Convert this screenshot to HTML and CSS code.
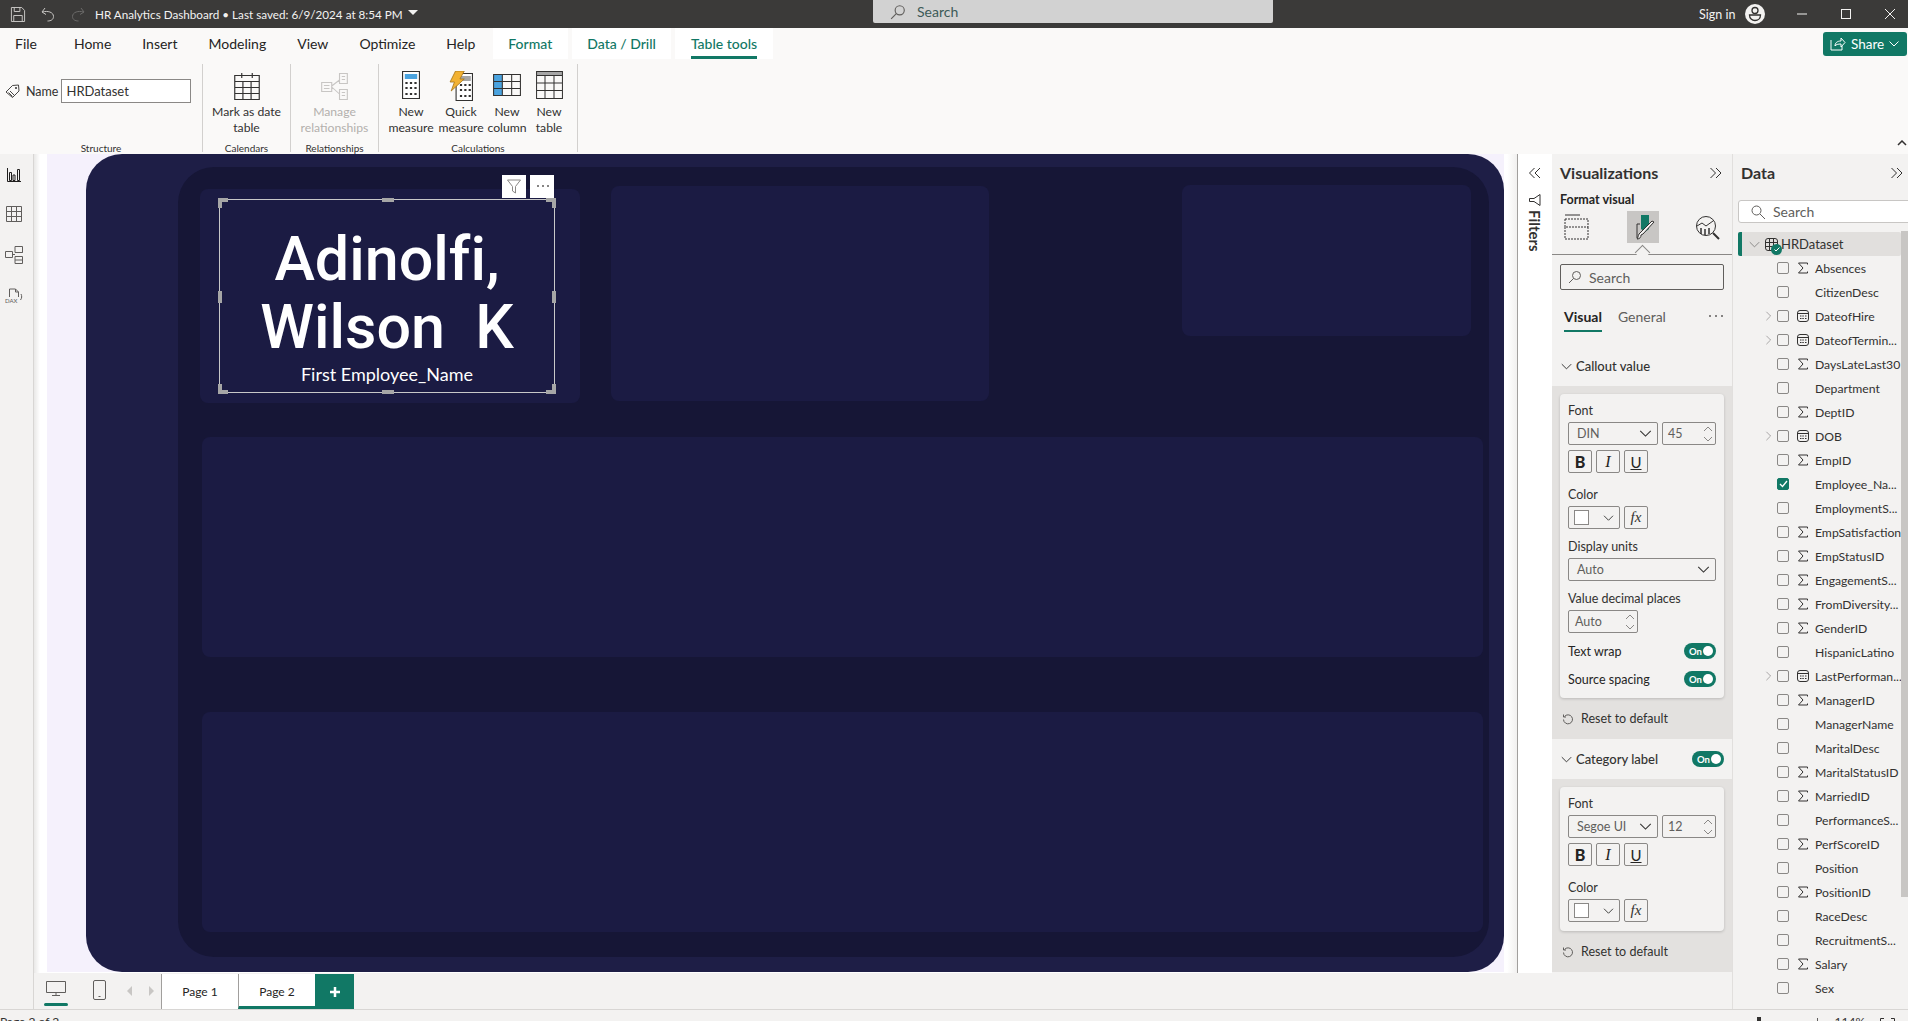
FILE: index.html
```html
<!DOCTYPE html>
<html lang="en">
<head>
    <meta charset="UTF-8">
    <title>HR Analytics Dashboard</title>
    <link rel="stylesheet" href="styles.css">
</head>
<body>
    <svg class="sprite" width="0" height="0">
        <symbol id="sigma" viewBox="0 0 12 12"><path d="M10.5 2.5V1H1.5L6 6 1.5 11h9V9.5" fill="none" stroke="#323130"/></symbol>
        <symbol id="cal" viewBox="0 0 12 12"><rect x=".5" y=".5" width="11" height="11" rx="2.500" fill="none" stroke="#323130"/><path d="M.5 3.500h11" stroke="#323130"/><path d="M3 6h1.500M5.300 6h1.500M8 6h1.500M3 8.500h1.500M5.300 8.500h1.500M8 8.500h1.500" stroke="#323130"/></symbol>
        <symbol id="chev-r" viewBox="0 0 10 14"><path d="M2 1l6 6-6 6" fill="none" stroke="#8a8886"/></symbol>
        <symbol id="chev-d" viewBox="0 0 14 8"><path d="M1 1l6 6 6-6" fill="none" stroke="#323130" stroke-width="1.200"/></symbol>
        <symbol id="double-r" viewBox="0 0 14 12"><path d="M1.500 1l5 5-5 5M7 1l5 5-5 5" fill="none" stroke="#323130"/></symbol>
        <symbol id="double-l" viewBox="0 0 14 12"><path d="M6.500 1l-5 5 5 5M12 1L7 6l5 5" fill="none" stroke="#323130"/></symbol>
        <symbol id="spin" viewBox="0 0 10 16"><path d="M1 5l4-4 4 4M1 11l4 4 4-4" fill="none" stroke="#8a8886"/></symbol>
        <symbol id="reset" viewBox="0 0 12 12"><path d="M2.500 3.500a4.500 4.500 0 1 1-1 3M1.500 1.500v2.500h2.500" fill="none" stroke="#605e5c"/></symbol>
        <symbol id="mag" viewBox="0 0 14 14"><circle cx="8.500" cy="5.500" r="4" fill="none" stroke="#605e5c"/><path d="M5.500 8.500L1 13" stroke="#605e5c"/></symbol>
    </svg>

    <header class="titlebar">
        <svg class="tb-icon" width="16" height="17" viewBox="0 0 17 17" preserveAspectRatio="none"><path d="M1.500 1.500h11l3 3v11h-14z" fill="none" stroke="#c8c6c4"/><path d="M4.500 1.500v4h6v-4M4 15.500V9.500h9v6" fill="none" stroke="#c8c6c4"/></svg>
        <svg class="tb-undo" width="14" height="15" viewBox="0 0 14 15"><path d="M4 1L1 5l4 2.500M1.500 5c5-1.500 11 0 11 4.500 0 3-2.500 4.500-6 4.500" fill="none" stroke="#c8c6c4"/></svg>
        <svg class="tb-redo" width="14" height="15" viewBox="0 0 14 15"><path d="M10 1l3 4-4 2.500M12.500 5c-5-1.500-11 0-11 4.500 0 3 2.500 4.500 6 4.500" fill="none" stroke="#6b6a69"/></svg>
        <span class="doc-title">HR Analytics Dashboard • Last saved: 6/9/2024 at 8:54 PM</span>
        <span class="doc-caret"></span>
        <div class="top-search">
            <svg width="16" height="16"><use href="#mag"/></svg>
            <span>Search</span>
        </div>
        <span class="sign-in">Sign in</span>
        <svg class="avatar" width="20" height="20" viewBox="0 0 20 20"><circle cx="10" cy="10" r="10" fill="#f3f2f1"/><circle cx="10" cy="6.500" r="3" fill="none" stroke="#323130" stroke-width="1.300"/><path d="M4.500 11h11c0 3.500-2.500 5.500-5.500 5.500S4.500 14.500 4.500 11z" fill="none" stroke="#323130" stroke-width="1.300"/></svg>
        <svg class="win-min" width="10" height="10"><path d="M0 5h10" stroke="#f3f2f1"/></svg>
        <svg class="win-max" width="10" height="10"><rect x=".5" y=".5" width="9" height="9" fill="none" stroke="#f3f2f1"/></svg>
        <svg class="win-close" width="10" height="10"><path d="M0 0l10 10M10 0L0 10" stroke="#f3f2f1"/></svg>
    </header>

    <section class="ribbon">
        <nav class="tabs">
            <span class="tab tab-file">File</span>
            <span class="tab">Home</span>
            <span class="tab">Insert</span>
            <span class="tab">Modeling</span>
            <span class="tab">View</span>
            <span class="tab">Optimize</span>
            <span class="tab tab-help">Help</span>
            <span class="tab tab-context">Format</span>
            <span class="tab tab-context">Data / Drill</span>
            <span class="tab tab-context tab-active">Table tools</span>
        </nav>
        <button class="share">
            <svg width="16" height="14" viewBox="0 0 16 14"><path d="M1 3v10h11V9M5 9c0-3 2-5 6-5V1l4 4.500L11 10V7c-3 0-5 .5-6 2z" fill="none" stroke="#fff"/></svg>
            <span>Share</span>
            <svg width="10" height="6" viewBox="0 0 10 6"><path d="M.5.500L5 5 9.500.5" fill="none" stroke="#fff"/></svg>
        </button>
        <div class="groups">
            <div class="group group-structure">
                <div class="group-body name-row">
                    <svg width="15" height="15" viewBox="0 0 15 15"><path d="M1 8l6.500-6.500L13.500 1l.5 6-6.500 6.500zM3.500 8.500l4 4M5 7l4 4" fill="none" stroke="#323130" stroke-width=".9"/><circle cx="11" cy="4" r="1" fill="#323130"/></svg>
                    <span class="name-lbl">Name</span>
                    <span class="name-input">HRDataset</span>
                </div>
                <div class="group-label">Structure</div>
            </div>
            <div class="group group-calendars">
                <div class="group-body">
                    <div class="rb-btn">
                        <svg class="icon-date" width="28" height="28" viewBox="0 0 24 28" preserveAspectRatio="none"><path d="M1.500 3.500h21v24h-21zM1.500 9.500h21M1.500 15.500h21M1.500 21.500h21M8.500 9.500v18M15.500 9.500v18M7.500 1v5M16.500 1v5" fill="none" stroke="#323130"/></svg>
                        <span>Mark as date<br>table</span>
                    </div>
                </div>
                <div class="group-label">Calendars</div>
            </div>
            <div class="group group-rel">
                <div class="group-body">
                    <div class="rb-btn rb-off">
                        <svg class="icon-date" width="29" height="28" viewBox="0 0 26 28" preserveAspectRatio="none"><path d="M17.500 1.500h7v10h-7zM1.500 10.500h9v9h-9zM17.500 17.500h7v10h-7zM10.500 14l7-6M10.500 15l7 7M19.500 4.500h3M19.500 7.500h3M19.500 20.500h3M19.500 23.500h3M3.500 13.500h5M3.500 16.500h5" fill="none" stroke="#c8c6c4"/></svg>
                        <span>Manage<br>relationships</span>
                    </div>
                </div>
                <div class="group-label">Relationships</div>
            </div>
            <div class="group group-calc">
                <div class="group-body calc-row">
                    <div class="rb-btn btn-measure">
                        <svg width="18" height="28" viewBox="0 0 16 28" preserveAspectRatio="none"><rect x=".5" y=".5" width="15" height="27" fill="#fff" stroke="#323130"/><rect x="2.500" y="3" width="11" height="5" fill="#4aa3df"/><path d="M3 12h2M7 12h2M11 12h2M3 17h2M7 17h2M11 17h2M3 23h2M7 23h2M11 23h2" stroke="#323130" stroke-width="2"/></svg>
                        <span>New<br>measure</span>
                    </div>
                    <div class="rb-btn btn-quick">
                        <svg width="24" height="30" viewBox="0 0 22 30" preserveAspectRatio="none"><rect x="6.500" y="2.500" width="15" height="27" fill="#fff" stroke="#323130"/><rect x="9" y="5" width="11" height="5" fill="#a6a6a6"/><path d="M10 14h2M14 14h2M18 14h2M10 19h2M14 19h2M18 19h2M10 25h2M14 25h2M18 25h2" stroke="#323130" stroke-width="2"/><path d="M6 0h8l-4 8h4L2 20l3-9H1z" fill="#f2b233" stroke="#a8761a" stroke-width=".8"/></svg>
                        <span>Quick<br>measure</span>
                    </div>
                    <div class="rb-btn btn-col">
                        <svg class="icon-col" width="28" height="22" viewBox="0 0 24 22" preserveAspectRatio="none"><rect x=".5" y=".5" width="7.500" height="21" fill="#4aa3df"/><path d="M.5.500h23v21H.5zM8 .5v21M16 .5v21M.5 7.500h23M.5 14.500h23" fill="none" stroke="#323130" stroke-width=".9"/></svg>
                        <span>New<br>column</span>
                    </div>
                    <div class="rb-btn btn-table">
                        <svg width="27" height="28" viewBox="0 0 24 28" preserveAspectRatio="none"><rect x=".5" y=".5" width="23" height="4" fill="#a6a6a6"/><path d="M.5.500h23v27H.5zM.5 4.500h23M.5 12h23M.5 19.500h23M8 4.500v23M16 4.500v23" fill="none" stroke="#323130" stroke-width=".9"/></svg>
                        <span>New<br>table</span>
                    </div>
                </div>
                <div class="group-label">Calculations</div>
            </div>
        </div>
        <svg class="ribbon-collapse" width="10" height="6" viewBox="0 0 10 6"><path d="M1 5l4-4 4 4" fill="none" stroke="#323130" stroke-width="1.500"/></svg>
    </section>

    <main class="workspace">
        <aside class="rail">
            <svg class="rail-icon" width="14" height="14" viewBox="0 0 14 14"><path d="M.5 0v13.500H14M2.500 4.500h2v8h-2zM6 7h2v5.500H6zM10.500 1.500h2v11h-2z" fill="none" stroke="#201f1e"/></svg>
            <svg class="rail-icon" width="16" height="16" viewBox="0 0 16 16"><path d="M.5.500h15v15H.5zM.5 5.500h15M.5 10.500h15M5.500.5v15M10.500.5v15" fill="none" stroke="#605e5c"/></svg>
            <svg class="rail-icon" width="18" height="18" viewBox="0 0 18 18"><path d="M.5 5.500h7v6h-7zM10 .5h7.500v6H10zM10 6.500h7.500M7.500 8.500H10M10 10.500h7.500v7H10zM10 14h7.500" fill="none" stroke="#605e5c"/></svg>
            <svg class="rail-icon" width="18" height="16" viewBox="0 0 18 16"><path d="M4.500 9V1h6l3 3v5M10.500 1v3h3M16 6c1 2 1 4-.5 6" fill="none" stroke="#605e5c"/><text x="0" y="15" class="dax-text">DAX</text></svg>
        </aside>
        <div class="center">
            <div class="canvas-row">
                <div class="canvas-gutter">
                    <div class="wallpaper">
                        <div class="page">
                            <div class="page-inner">
                                <div class="top-row">
                                    <div class="card card-name">
                                        <div class="selection">
                                            <div class="callout">Adinolfi,<br>Wilson&nbsp;&nbsp;K</div>
                                            <div class="callout-label">First Employee_Name</div>
                                            <i class="h h-tl"></i><i class="h h-tr"></i><i class="h h-bl"></i><i class="h h-br"></i>
                                            <i class="h-edge h-t"></i><i class="h-edge h-b"></i><i class="h-edge h-l"></i><i class="h-edge h-r"></i>
                                            <div class="visual-head">
                                                <span class="vh-btn"><svg width="14" height="15" viewBox="0 0 14 15"><path d="M.5 1h13L8.500 7.500V14l-3-2V7.500z" fill="none" stroke="#8a8886"/></svg></span>
                                                <span class="vh-btn vh-dots"><svg width="13" height="3" viewBox="0 0 13 3"><path d="M1 1h2M6 1h2M11 1h2" stroke="#605e5c" stroke-width="1.500"/></svg></span>
                                            </div>
                                        </div>
                                    </div>
                                    <div class="card card-b"></div>
                                    <div class="card card-c"></div>
                                </div>
                                <div class="card card-wide"></div>
                                <div class="card card-wide card-low"></div>
                            </div>
                        </div>
                    </div>
                </div>
                <aside class="filters">
                    <svg class="filters-chev" width="14" height="12"><use href="#double-l"/></svg>
                    <svg class="filters-funnel" width="12" height="12" viewBox="0 0 12 12"><path d="M11 .5v11L5 7.500H.5v-3H5z" fill="none" stroke="#323130"/></svg>
                    <span class="filters-text">Filters</span>
                </aside>
            </div>
            <div class="page-bar">
                <div class="view-btn view-on">
                    <svg width="20" height="15" viewBox="0 0 20 15"><path d="M.5.500h19v11H.5zM10 11.500v3M6 14.500h8" fill="none" stroke="#605e5c"/></svg>
                </div>
                <div class="view-btn view-phone">
                    <svg width="13" height="20" viewBox="0 0 13 20"><rect x=".5" y=".5" width="12" height="19" rx="1.500" fill="none" stroke="#605e5c"/><path d="M5.500 16.500h2" stroke="#605e5c"/></svg>
                </div>
                <span class="page-arrow arrow-l"></span>
                <span class="page-arrow arrow-r"></span>
                <div class="page-tab">Page 1</div>
                <div class="page-tab page-tab-on">Page 2</div>
                <div class="page-add">
                    <svg width="12" height="12"><path d="M6 1v10M1 6h10" stroke="#fff" stroke-width="2.500"/></svg>
                </div>
            </div>
        </div>

        <aside class="viz">
            <div class="pane-head">
                <span>Visualizations</span>
                <svg width="14" height="12"><use href="#double-r"/></svg>
            </div>
            <div class="fmt-label">Format visual</div>
            <div class="fmt-icons">
                <svg width="25" height="26" viewBox="0 0 25 26"><path d="M1 1h15" stroke="#323130"/><path d="M1 5h23v8H1zM1 13v12h23V13" fill="none" stroke="#323130" stroke-dasharray="2 1"/></svg>
                <span class="fmt-on">
                    <svg width="24" height="26" viewBox="0 0 24 26"><path d="M10 1h8v14l-4 3-4-3z" fill="#117865"/><path d="M6 24V10h3M18 10h1" fill="none" stroke="#323130"/><path d="M23 8L12 20l-2 1c0 2-1 4-4 4 1-1 1-3 2-5l2-2L21 7z" fill="#f3f2f1" stroke="#323130"/></svg>
                </span>
                <svg width="25" height="25" viewBox="0 0 25 25"><circle cx="11" cy="11" r="9.500" fill="none" stroke="#323130"/><path d="M18 18l6 6" stroke="#323130" stroke-width="2"/><path d="M2 11l5-3 4 3 7-5" fill="none" stroke="#323130"/><path d="M6 13v6M10 14v6M14 13v6" stroke="#323130" stroke-width="1.500"/></svg>
            </div>
            <div class="fmt-line"></div>
            <div class="viz-search">
                <svg width="14" height="14"><use href="#mag"/></svg>
                <span>Search</span>
            </div>
            <div class="viz-tabs">
                <span class="viz-tab viz-tab-on">Visual</span>
                <span class="viz-tab">General</span>
                <svg class="viz-more" width="15" height="3" viewBox="0 0 15 3"><path d="M1 1h2M7 1h2M13 1h2" stroke="#605e5c" stroke-width="1.500"/></svg>
            </div>
            <div class="sec-head">
                <svg width="11" height="7"><use href="#chev-d"/></svg>
                <span>Callout value</span>
            </div>
            <div class="sec-body sec-callout">
                <div class="fmt-card">
                    <div class="lbl">Font</div>
                    <div class="ctl-row">
                        <div class="ctl ctl-font"><span>DIN</span><svg width="13" height="7"><use href="#chev-d"/></svg></div>
                        <div class="ctl ctl-size"><span>45</span><svg width="10" height="16"><use href="#spin"/></svg></div>
                    </div>
                    <div class="biu">
                        <span class="ctl ctl-b">B</span><span class="ctl ctl-i">I</span><span class="ctl ctl-u">U</span>
                    </div>
                    <div class="lbl lbl-gap13">Color</div>
                    <div class="ctl-row">
                        <div class="ctl ctl-color"><i class="swatch"></i><svg width="11" height="6"><use href="#chev-d"/></svg></div>
                        <span class="ctl ctl-fx">fx</span>
                    </div>
                    <div class="lbl lbl-gap9">Display units</div>
                    <div class="ctl ctl-full"><span>Auto</span><svg width="13" height="7"><use href="#chev-d"/></svg></div>
                    <div class="lbl lbl-gap9">Value decimal places</div>
                    <div class="ctl ctl-dec"><span>Auto</span><svg width="10" height="16"><use href="#spin"/></svg></div>
                    <div class="switch-row switch-first"><span>Text wrap</span><span class="toggle">On<i></i></span></div>
                    <div class="switch-row"><span>Source spacing</span><span class="toggle">On<i></i></span></div>
                </div>
                <div class="reset"><svg width="12" height="12"><use href="#reset"/></svg><span>Reset to default</span></div>
            </div>
            <div class="sec-head sec-head-toggle">
                <svg width="11" height="7"><use href="#chev-d"/></svg>
                <span>Category label</span>
                <span class="toggle">On<i></i></span>
            </div>
            <div class="sec-body">
                <div class="fmt-card">
                    <div class="lbl">Font</div>
                    <div class="ctl-row">
                        <div class="ctl ctl-font"><span>Segoe UI</span><svg width="13" height="7"><use href="#chev-d"/></svg></div>
                        <div class="ctl ctl-size"><span>12</span><svg width="10" height="16"><use href="#spin"/></svg></div>
                    </div>
                    <div class="biu">
                        <span class="ctl ctl-b">B</span><span class="ctl ctl-i">I</span><span class="ctl ctl-u">U</span>
                    </div>
                    <div class="lbl lbl-gap13">Color</div>
                    <div class="ctl-row">
                        <div class="ctl ctl-color"><i class="swatch"></i><svg width="11" height="6"><use href="#chev-d"/></svg></div>
                        <span class="ctl ctl-fx">fx</span>
                    </div>
                </div>
                <div class="reset"><svg width="12" height="12"><use href="#reset"/></svg><span>Reset to default</span></div>
            </div>
        </aside>

        <aside class="data">
            <div class="pane-head pane-head-data">
                <span>Data</span>
                <svg width="14" height="12"><use href="#double-r"/></svg>
            </div>
            <div class="data-search">
                <svg width="14" height="14" viewBox="0 0 14 14"><circle cx="5.500" cy="5.500" r="4.500" fill="none" stroke="#605e5c"/><path d="M9 9l5 5" stroke="#605e5c"/></svg>
                <span>Search</span>
            </div>
            <div class="scroll-thumb"></div>
            <div class="table-row">
                <svg class="table-chev" width="11" height="7"><use href="#chev-d" opacity=".5"/></svg>
                <span class="table-icon">
                    <svg width="13" height="13" viewBox="0 0 13 13"><path d="M3 .5h7a2.500 2.500 0 0 1 2.500 2.500v7a2.500 2.500 0 0 1-2.500 2.500H3A2.500 2.500 0 0 1 .5 10V3A2.500 2.500 0 0 1 3 .5zM4.500.5v12M8.500.5v12M.5 4.500h12M.5 8.500h12" fill="none" stroke="#323130"/></svg>
                    <i class="table-check"><svg width="6" height="5" viewBox="0 0 6 5"><path d="M.5 2.500l1.500 1.500L5.500.5" fill="none" stroke="#fff"/></svg></i>
                </span>
                <span>HRDataset</span>
            </div>
            <ul class="fields">
                <li class="field"><i class="exp"></i><i class="box"></i><svg width="12" height="12"><use href="#sigma"/></svg><span>Absences</span></li>
                <li class="field"><i class="exp"></i><i class="box"></i><i class="noicon"></i><span>CitizenDesc</span></li>
                <li class="field"><svg class="exp" width="7" height="10"><use href="#chev-r"/></svg><i class="box"></i><svg width="12" height="12"><use href="#cal"/></svg><span>DateofHire</span></li>
                <li class="field"><svg class="exp" width="7" height="10"><use href="#chev-r"/></svg><i class="box"></i><svg width="12" height="12"><use href="#cal"/></svg><span>DateofTermin...</span></li>
                <li class="field"><i class="exp"></i><i class="box"></i><svg width="12" height="12"><use href="#sigma"/></svg><span>DaysLateLast30</span></li>
                <li class="field"><i class="exp"></i><i class="box"></i><i class="noicon"></i><span>Department</span></li>
                <li class="field"><i class="exp"></i><i class="box"></i><svg width="12" height="12"><use href="#sigma"/></svg><span>DeptID</span></li>
                <li class="field"><svg class="exp" width="7" height="10"><use href="#chev-r"/></svg><i class="box"></i><svg width="12" height="12"><use href="#cal"/></svg><span>DOB</span></li>
                <li class="field"><i class="exp"></i><i class="box"></i><svg width="12" height="12"><use href="#sigma"/></svg><span>EmpID</span></li>
                <li class="field"><i class="exp"></i><i class="box box-on"><svg width="9" height="8" viewBox="0 0 9 8"><path d="M1 4l2.500 2.500L8 1" fill="none" stroke="#fff" stroke-width="1.300"/></svg></i><i class="noicon"></i><span>Employee_Na...</span></li>
                <li class="field"><i class="exp"></i><i class="box"></i><i class="noicon"></i><span>EmploymentS...</span></li>
                <li class="field"><i class="exp"></i><i class="box"></i><svg width="12" height="12"><use href="#sigma"/></svg><span>EmpSatisfaction</span></li>
                <li class="field"><i class="exp"></i><i class="box"></i><svg width="12" height="12"><use href="#sigma"/></svg><span>EmpStatusID</span></li>
                <li class="field"><i class="exp"></i><i class="box"></i><svg width="12" height="12"><use href="#sigma"/></svg><span>EngagementS...</span></li>
                <li class="field"><i class="exp"></i><i class="box"></i><svg width="12" height="12"><use href="#sigma"/></svg><span>FromDiversity...</span></li>
                <li class="field"><i class="exp"></i><i class="box"></i><svg width="12" height="12"><use href="#sigma"/></svg><span>GenderID</span></li>
                <li class="field"><i class="exp"></i><i class="box"></i><i class="noicon"></i><span>HispanicLatino</span></li>
                <li class="field"><svg class="exp" width="7" height="10"><use href="#chev-r"/></svg><i class="box"></i><svg width="12" height="12"><use href="#cal"/></svg><span>LastPerforman...</span></li>
                <li class="field"><i class="exp"></i><i class="box"></i><svg width="12" height="12"><use href="#sigma"/></svg><span>ManagerID</span></li>
                <li class="field"><i class="exp"></i><i class="box"></i><i class="noicon"></i><span>ManagerName</span></li>
                <li class="field"><i class="exp"></i><i class="box"></i><i class="noicon"></i><span>MaritalDesc</span></li>
                <li class="field"><i class="exp"></i><i class="box"></i><svg width="12" height="12"><use href="#sigma"/></svg><span>MaritalStatusID</span></li>
                <li class="field"><i class="exp"></i><i class="box"></i><svg width="12" height="12"><use href="#sigma"/></svg><span>MarriedID</span></li>
                <li class="field"><i class="exp"></i><i class="box"></i><i class="noicon"></i><span>PerformanceS...</span></li>
                <li class="field"><i class="exp"></i><i class="box"></i><svg width="12" height="12"><use href="#sigma"/></svg><span>PerfScoreID</span></li>
                <li class="field"><i class="exp"></i><i class="box"></i><i class="noicon"></i><span>Position</span></li>
                <li class="field"><i class="exp"></i><i class="box"></i><svg width="12" height="12"><use href="#sigma"/></svg><span>PositionID</span></li>
                <li class="field"><i class="exp"></i><i class="box"></i><i class="noicon"></i><span>RaceDesc</span></li>
                <li class="field"><i class="exp"></i><i class="box"></i><i class="noicon"></i><span>RecruitmentS...</span></li>
                <li class="field"><i class="exp"></i><i class="box"></i><svg width="12" height="12"><use href="#sigma"/></svg><span>Salary</span></li>
                <li class="field"><i class="exp"></i><i class="box"></i><i class="noicon"></i><span>Sex</span></li>
            </ul>
        </aside>
    </main>

    <footer class="status">
        <span>Page 2 of 2</span>
        <div class="status-right">
            <i class="slider-knob"></i>
            <i class="slider-tick"></i>
            <span>114%</span>
            <svg class="fit-icon" width="15" height="10" viewBox="0 0 15 10"><path d="M4 .5H.5V9M11 .5h3.500V9" fill="none" stroke="#323130"/></svg>
        </div>
    </footer>
</body>
</html>
```

FILE: styles.css
```css
/* Report editor shell */
* {
    box-sizing: border-box;
}

body {
    margin: 0;
    width: 1908px;
    height: 1021px;
    overflow: hidden;
    display: flex;
    flex-direction: column;
    background-color: #f3f2f1;
    color: #252423;
    font-family: Lato, "Open Sans", sans-serif;
    font-size: 13px;
}

svg {
    flex: none;
    display: block;
}

.sprite {
    position: absolute;
}

i {
    font-style: normal;
}

/* Title bar */
.titlebar {
    height: 28px;
    flex: none;
    display: flex;
    align-items: center;
    background-color: #3b3a39;
    color: #f3f2f1;
    padding-left: 10px;
}

.tb-undo { margin-left: 15px; }
.tb-redo { margin-left: 16px; }

.doc-title {
    margin-left: 10px;
    font-size: 11.700px;
    white-space: nowrap;
    width: 313px;
}

.doc-caret {
    border-left: 5px solid transparent;
    border-right: 5px solid transparent;
    border-top: 5px solid #f3f2f1;
    margin-bottom: 4px;
}

.top-search {
    width: 400px;
    height: 23px;
    margin-left: 455px;
    align-self: flex-start;
    background-color: #d2d2d2;
    border-radius: 0 0 2px 2px;
    display: flex;
    align-items: center;
    gap: 11px;
    padding-left: 17px;
    color: #3d5a58;
    font-size: 14px;
}

.sign-in {
    margin-left: 426px;
    width: 46px;
    font-size: 12.500px;
}

.win-min { margin-left: 32px; }
.win-max { margin-left: 34px; }
.win-close { margin-left: 34px; }

/* Ribbon */
.ribbon {
    height: 126px;
    flex: none;
    background-color: #faf9f8;
    position: relative;
}

.tabs {
    height: 31px;
    display: flex;
    align-items: center;
}

.tab {
    height: 31px;
    line-height: 31px;
    padding: 0 15.500px;
    font-size: 14px;
    white-space: nowrap;
}

.tab-file { padding-left: 15px; margin-right: 6px; }
.tab-help { margin-right: 2px; }

.tab-context {
    background-color: #fff;
    color: #117865;
    margin-right: 4px;
    font-weight: 500;
}

.tab-active {
    position: relative;
}

.tab-active::after {
    content: "";
    position: absolute;
    left: 15.500px;
    right: 15.500px;
    bottom: 0;
    height: 3px;
    background-color: #117865;
}

.share {
    position: absolute;
    top: 4px;
    right: 1px;
    width: 84px;
    height: 24px;
    background-color: #117865;
    border: 0;
    border-radius: 3px;
    color: #fff;
    font: 13.500px Lato, sans-serif;
    display: flex;
    align-items: center;
    gap: 5px;
    padding: 0 7px;
}

.groups {
    display: flex;
    height: 88px;
    margin-top: 5px;
}

.group {
    display: flex;
    flex-direction: column;
    border-right: 1px solid #d2d0ce;
}

.group-structure { width: 203px; }
.group-calendars { width: 88px; }
.group-rel { width: 88px; }
.group-calc { width: 199px; }

.group-body {
    flex: 1;
    display: flex;
    justify-content: center;
    color: #323130;
}

.group-label {
    height: 16px;
    line-height: 24px;
    text-align: center;
    font-size: 10px;
    color: #323130;
}

.name-row {
    align-items: center;
    justify-content: flex-start;
    padding: 0 0 18px 5px;
    font-size: 12.500px;
}

.name-lbl {
    margin-left: 6px;
}

.name-input {
    width: 130px;
    height: 24px;
    margin-left: 3px;
    border: 1px solid #8a8886;
    background-color: #fff;
    padding-left: 4px;
    line-height: 22px;
    font-size: 13px;
}

/* Ribbon buttons: icon slot then a two line caption */
.rb-btn {
    display: grid;
    grid-template-rows: 33px auto;
    justify-items: center;
    padding-top: 7px;
    text-align: center;
    font-size: 12.200px;
    line-height: 16px;
    white-space: nowrap;
}

.icon-date { margin-top: 1px; }
.icon-col { margin-top: 3px; }

.rb-off {
    color: #b3b0ad;
}

.calc-row {
    justify-content: flex-start;
    padding-left: 9px;
}

.btn-measure { width: 46px; margin-right: 4px; }
.btn-quick { width: 46px; margin-right: 2px; }
.btn-col { width: 42px; margin-right: 4px; }
.btn-table { width: 34px; }

.ribbon-collapse {
    position: absolute;
    right: 1px;
    bottom: 8px;
}

/* Main row */
.workspace {
    height: 855px;
    flex: none;
    display: flex;
}

.rail {
    width: 34px;
    flex: none;
    background-color: #f3f2f1;
    border-right: 1px solid #d8d6d4;
    display: flex;
    flex-direction: column;
    align-items: center;
    gap: 24px;
    padding: 14px 6px 0 0;
}

.dax-text {
    font-size: 6px;
    fill: #605e5c;
}

.center {
    width: 1518px;
    flex: none;
    display: flex;
    flex-direction: column;
}

.canvas-row {
    height: 819px;
    flex: none;
    display: flex;
    background-color: #fff;
}

.canvas-gutter {
    width: 1484px;
    padding: 0 13px 1px 13px;
    border-right: 1px solid #a19f9d;
    background: linear-gradient(to right, #e9e8e7, #fff 6px, #fff calc(100% - 10px), #f1f0ef);
}

.wallpaper {
    height: 818px;
    padding-left: 39px;
    background-color: #f5f1fc;
}

/* Report page */
.page {
    height: 818px;
    padding: 13px 15px 15px 92px;
    background-color: #1e1e46;
    border-radius: 36px;
}

.page-inner {
    height: 790px;
    padding: 18px 0 0 22px;
    background-color: #161636;
    border-radius: 36px;
}

.card {
    background-color: #1b1b43;
    border-radius: 8px;
}

.top-row {
    display: flex;
    align-items: flex-start;
    height: 252px;
}

.card-name {
    width: 380px;
    height: 214px;
    margin-top: 4px;
    position: relative;
}

.card-b {
    width: 378px;
    height: 215px;
    margin: 1px 0 0 31px;
}

.card-c {
    width: 289px;
    height: 151px;
    margin-left: 193px;
}

.card-wide {
    width: 1281px;
    height: 220px;
    margin-left: 2px;
}

.card-low {
    margin-top: 55px;
}

/* Selected visual */
.selection {
    position: absolute;
    left: 19px;
    top: 10px;
    width: 336px;
    height: 194px;
    border: 1px solid #c8c8c8;
    color: #fff;
    text-align: center;
}

.callout {
    padding-top: 25px;
    font-family: Roboto, sans-serif;
    font-weight: 500;
    font-size: 61px;
    line-height: 68px;
    font-variant-ligatures: none;
}

.callout-label {
    margin-top: 1px;
    font-size: 18px;
    line-height: 24px;
}

.h {
    position: absolute;
    width: 10px;
    height: 10px;
    border: 0 solid #a6a6a6;
}

.h-tl { left: -2px; top: -2px; border-width: 4px 0 0 4px; }
.h-tr { right: -2px; top: -2px; border-width: 4px 4px 0 0; }
.h-bl { left: -2px; bottom: -2px; border-width: 0 0 4px 4px; }
.h-br { right: -2px; bottom: -2px; border-width: 0 4px 4px 0; }

.h-edge {
    position: absolute;
    background-color: #a6a6a6;
}

.h-t, .h-b {
    left: 162px;
    width: 12px;
    height: 4px;
}

.h-t { top: -2px; }
.h-b { bottom: -2px; }

.h-l, .h-r {
    top: 91px;
    width: 4px;
    height: 12px;
}

.h-l { left: -2px; }
.h-r { right: -2px; }

.visual-head {
    position: absolute;
    right: 0;
    top: -25px;
    display: flex;
    gap: 4px;
}

.vh-btn {
    width: 24px;
    height: 23px;
    background-color: #fff;
    display: flex;
    align-items: center;
    justify-content: center;
}

/* Filters strip */
.filters {
    width: 34px;
    background-color: #fff;
    display: flex;
    flex-direction: column;
    align-items: center;
    padding-top: 13px;
}

.filters-funnel {
    margin-top: 15px;
}

.filters-text {
    writing-mode: vertical-rl;
    margin-top: 4px;
    font-size: 15px;
    font-weight: 700;
    color: #323130;
}

/* Page tabs */
.page-bar {
    height: 36px;
    flex: none;
    display: flex;
    align-items: flex-end;
    background-color: #f3f2f1;
}

.view-btn {
    height: 35px;
    display: flex;
    justify-content: center;
}

.view-on {
    width: 24px;
    margin-left: 10px;
    padding-top: 7px;
    position: relative;
}

.view-on::after {
    content: "";
    position: absolute;
    left: 0;
    right: 0;
    top: 29px;
    height: 3px;
    border-radius: 2px;
    background-color: #117865;
}

.view-phone {
    width: 13px;
    margin-left: 25px;
    padding-top: 6px;
}

.page-arrow {
    width: 0;
    height: 0;
    align-self: center;
    border-top: 5px solid transparent;
    border-bottom: 5px solid transparent;
}

.arrow-l {
    margin-left: 21px;
    border-right: 5px solid #c8c6c4;
}

.arrow-r {
    margin-left: 17px;
    border-left: 5px solid #c8c6c4;
}

.page-tab {
    width: 77px;
    height: 35px;
    line-height: 36px;
    text-align: center;
    background-color: #fff;
    border-left: 1px solid #a19f9d;
    font-size: 12px;
}

.arrow-r + .page-tab {
    margin-left: 7px;
}

.page-tab-on {
    border-bottom: 3px solid #117865;
}

.page-add {
    width: 39px;
    height: 35px;
    background-color: #117865;
    display: flex;
    align-items: center;
    justify-content: center;
}

/* Visualizations pane */
.viz {
    width: 181px;
    flex: none;
    background-color: #f3f2f1;
    border-right: 1px solid #e1dfdd;
}

.pane-head {
    height: 37px;
    margin-bottom: 1px;
    display: flex;
    align-items: center;
    justify-content: space-between;
    padding: 0 9px 0 8px;
    font-size: 16px;
    font-weight: 700;
    color: #323130;
}

.fmt-label {
    height: 16px;
    line-height: 16px;
    padding-left: 8px;
    font-weight: 700;
    font-size: 12.500px;
}

.fmt-icons {
    height: 32px;
    margin-top: 3px;
    padding: 0 12px;
    display: flex;
    align-items: center;
    justify-content: space-between;
}

.fmt-on {
    width: 32px;
    height: 32px;
    background-color: #c8c6c4;
    display: flex;
    align-items: center;
    justify-content: center;
    margin-left: 2px;
}

.fmt-line {
    height: 12px;
    border-bottom: 1px solid #8a8886;
    position: relative;
}

.fmt-line::after {
    content: "";
    position: absolute;
    left: 85px;
    bottom: -4px;
    width: 10px;
    height: 10px;
    transform: rotate(45deg);
    background-color: #f3f2f1;
    border-left: 1px solid #8a8886;
    border-top: 1px solid #8a8886;
}

.viz-search {
    height: 26px;
    margin: 9px 8px 0;
    border: 1px solid #605e5c;
    border-radius: 2px;
    display: flex;
    align-items: center;
    gap: 7px;
    padding-left: 7px;
    font-size: 14px;
    color: #605e5c;
}

.viz-tabs {
    height: 28px;
    margin-top: 14px;
    display: flex;
    padding-left: 12px;
    font-size: 14px;
    color: #605e5c;
}

.viz-tab {
    height: 28px;
    line-height: 26px;
    margin-right: 16px;
}

.viz-tab-on {
    color: #252423;
    font-weight: 700;
    border-bottom: 2px solid #117865;
}

.viz-more {
    margin: 11px 0 0 26px;
}

.sec-head {
    height: 40px;
    margin-top: 14px;
    display: flex;
    align-items: center;
    gap: 4px;
    padding-left: 9px;
    font-weight: 500;
    font-size: 13px;
    color: #323130;
}

.sec-head-toggle {
    margin-top: 0;
    background-color: #f3f2f1;
}

.sec-head-toggle .toggle {
    margin-left: auto;
    margin-right: 8px;
}

.sec-body {
    background-color: #e3e1df;
    padding-top: 8px;
}

.fmt-card {
    margin: 0 8px;
    padding: 8px 8px 9px;
    background-color: #f3f2f1;
    border-radius: 4px;
    box-shadow: 0 1px 3px rgba(0, 0, 0, 0.18);
}

.sec-callout .fmt-card {
    padding-bottom: 10px;
}

.lbl {
    height: 18px;
    line-height: 18px;
    margin-bottom: 2px;
    font-size: 12.500px;
    color: #323130;
}

.lbl-gap13 { margin-top: 13px; }
.lbl-gap9 { margin-top: 9px; }

.ctl-row {
    display: flex;
    gap: 4px;
}

.ctl {
    height: 23px;
    border: 1px solid #8a8886;
    border-radius: 2px;
    display: flex;
    align-items: center;
    font-size: 12.500px;
    color: #605e5c;
}

.ctl-font {
    width: 90px;
    padding: 0 5px 0 8px;
    justify-content: space-between;
}

.ctl-size {
    width: 54px;
    padding: 0 2px 0 5px;
    justify-content: space-between;
}

.biu {
    display: flex;
    gap: 4px;
    margin-top: 5px;
}

.biu .ctl {
    width: 24px;
    justify-content: center;
    color: #252423;
}

.ctl-b { font-weight: 900; font-size: 16px; }
.ctl-i { font-family: "Liberation Serif", serif; font-style: italic; font-size: 16px; }
.ctl-u { text-decoration: underline; font-size: 15px; }

.ctl-color {
    width: 52px;
    padding: 0 5px;
    justify-content: space-between;
}

.swatch {
    width: 15px;
    height: 15px;
    background-color: #fff;
    border: 1px solid #8a8886;
}

.ctl-fx {
    width: 24px;
    justify-content: center;
    font-family: "Liberation Serif", serif;
    font-style: italic;
    font-size: 15px;
    color: #323130;
}

.ctl-full {
    justify-content: space-between;
    padding: 0 5px 0 8px;
}

.ctl-dec {
    width: 70px;
    justify-content: space-between;
    padding: 0 2px 0 6px;
}

.switch-row {
    height: 18px;
    margin-top: 10px;
    display: flex;
    align-items: center;
    justify-content: space-between;
    font-size: 12.500px;
}

.switch-first {
    margin-top: 9px;
}

.toggle {
    width: 32px;
    height: 16px;
    border-radius: 8px;
    background-color: #117865;
    color: #fff;
    font-size: 9.500px;
    font-weight: 700;
    display: flex;
    align-items: center;
    justify-content: space-between;
    padding: 0 3px 0 5px;
}

.toggle i {
    width: 10px;
    height: 10px;
    border-radius: 50%;
    background-color: #fff;
}

.reset {
    height: 41px;
    display: flex;
    align-items: center;
    gap: 7px;
    padding-left: 10px;
    font-size: 12.500px;
    color: #323130;
}

/* Data pane */
.data {
    flex: 1;
    min-width: 0;
    background-color: #f3f2f1;
    position: relative;
    overflow: hidden;
}

.pane-head-data {
    padding-right: 4px;
    padding-left: 8px;
}

.data-search {
    height: 23px;
    width: 190px;
    margin: 9px 0 0 5px;
    background-color: #fff;
    border: 1px solid #c8c6c4;
    border-radius: 3px;
    display: flex;
    align-items: center;
    gap: 8px;
    padding-left: 12px;
    font-size: 14px;
    color: #605e5c;
}

.scroll-thumb {
    position: absolute;
    left: 168px;
    top: 77px;
    width: 7px;
    height: 666px;
    background-color: #c8c6c4;
}

.table-row {
    height: 24px;
    width: 163px;
    margin: 9px 0 0 5px;
    padding-left: 7px;
    border-left: 4px solid #117865;
    border-radius: 2px;
    background-color: #e1dfdd;
    display: flex;
    align-items: center;
    font-size: 13px;
    color: #323130;
}

.table-icon {
    position: relative;
    margin: 0 0 0 5px;
    width: 16px;
}

.table-check {
    position: absolute;
    left: 6px;
    top: 6px;
    width: 11px;
    height: 11px;
    border-radius: 50%;
    background-color: #117865;
    display: flex;
    align-items: center;
    justify-content: center;
}

.fields {
    list-style: none;
    margin: 0;
    padding: 0;
}

.field {
    height: 24px;
    padding-left: 32px;
    display: flex;
    align-items: center;
    font-size: 12.200px;
    color: #323130;
}

.exp {
    width: 7px;
    margin-right: 5px;
}

.box {
    width: 12px;
    height: 12px;
    border: 1px solid #8a8886;
    border-radius: 2px;
    background-color: #f3f2f1;
    display: flex;
    align-items: center;
    justify-content: center;
    flex: none;
    margin-right: 8px;
}

.box-on {
    background-color: #117865;
    border-color: #117865;
}

.noicon {
    width: 12px;
    flex: none;
}

.field span {
    margin-left: 6px;
    white-space: nowrap;
}

/* Status bar */
.status {
    flex: 1;
    border-top: 1px solid #d8d6d4;
    padding-top: 5px;
    display: flex;
    justify-content: space-between;
    font-size: 12px;
    line-height: 14px;
    color: #323130;
}

.status-right {
    display: flex;
    margin-right: 13px;
}

.slider-knob {
    width: 4px;
    height: 10px;
    margin-top: 2px;
    background-color: #323130;
}

.slider-tick {
    width: 1px;
    height: 10px;
    margin: 3px 17px 0 56px;
    background-color: #605e5c;
}

.fit-icon {
    margin: 3px 0 0 15px;
}
```
